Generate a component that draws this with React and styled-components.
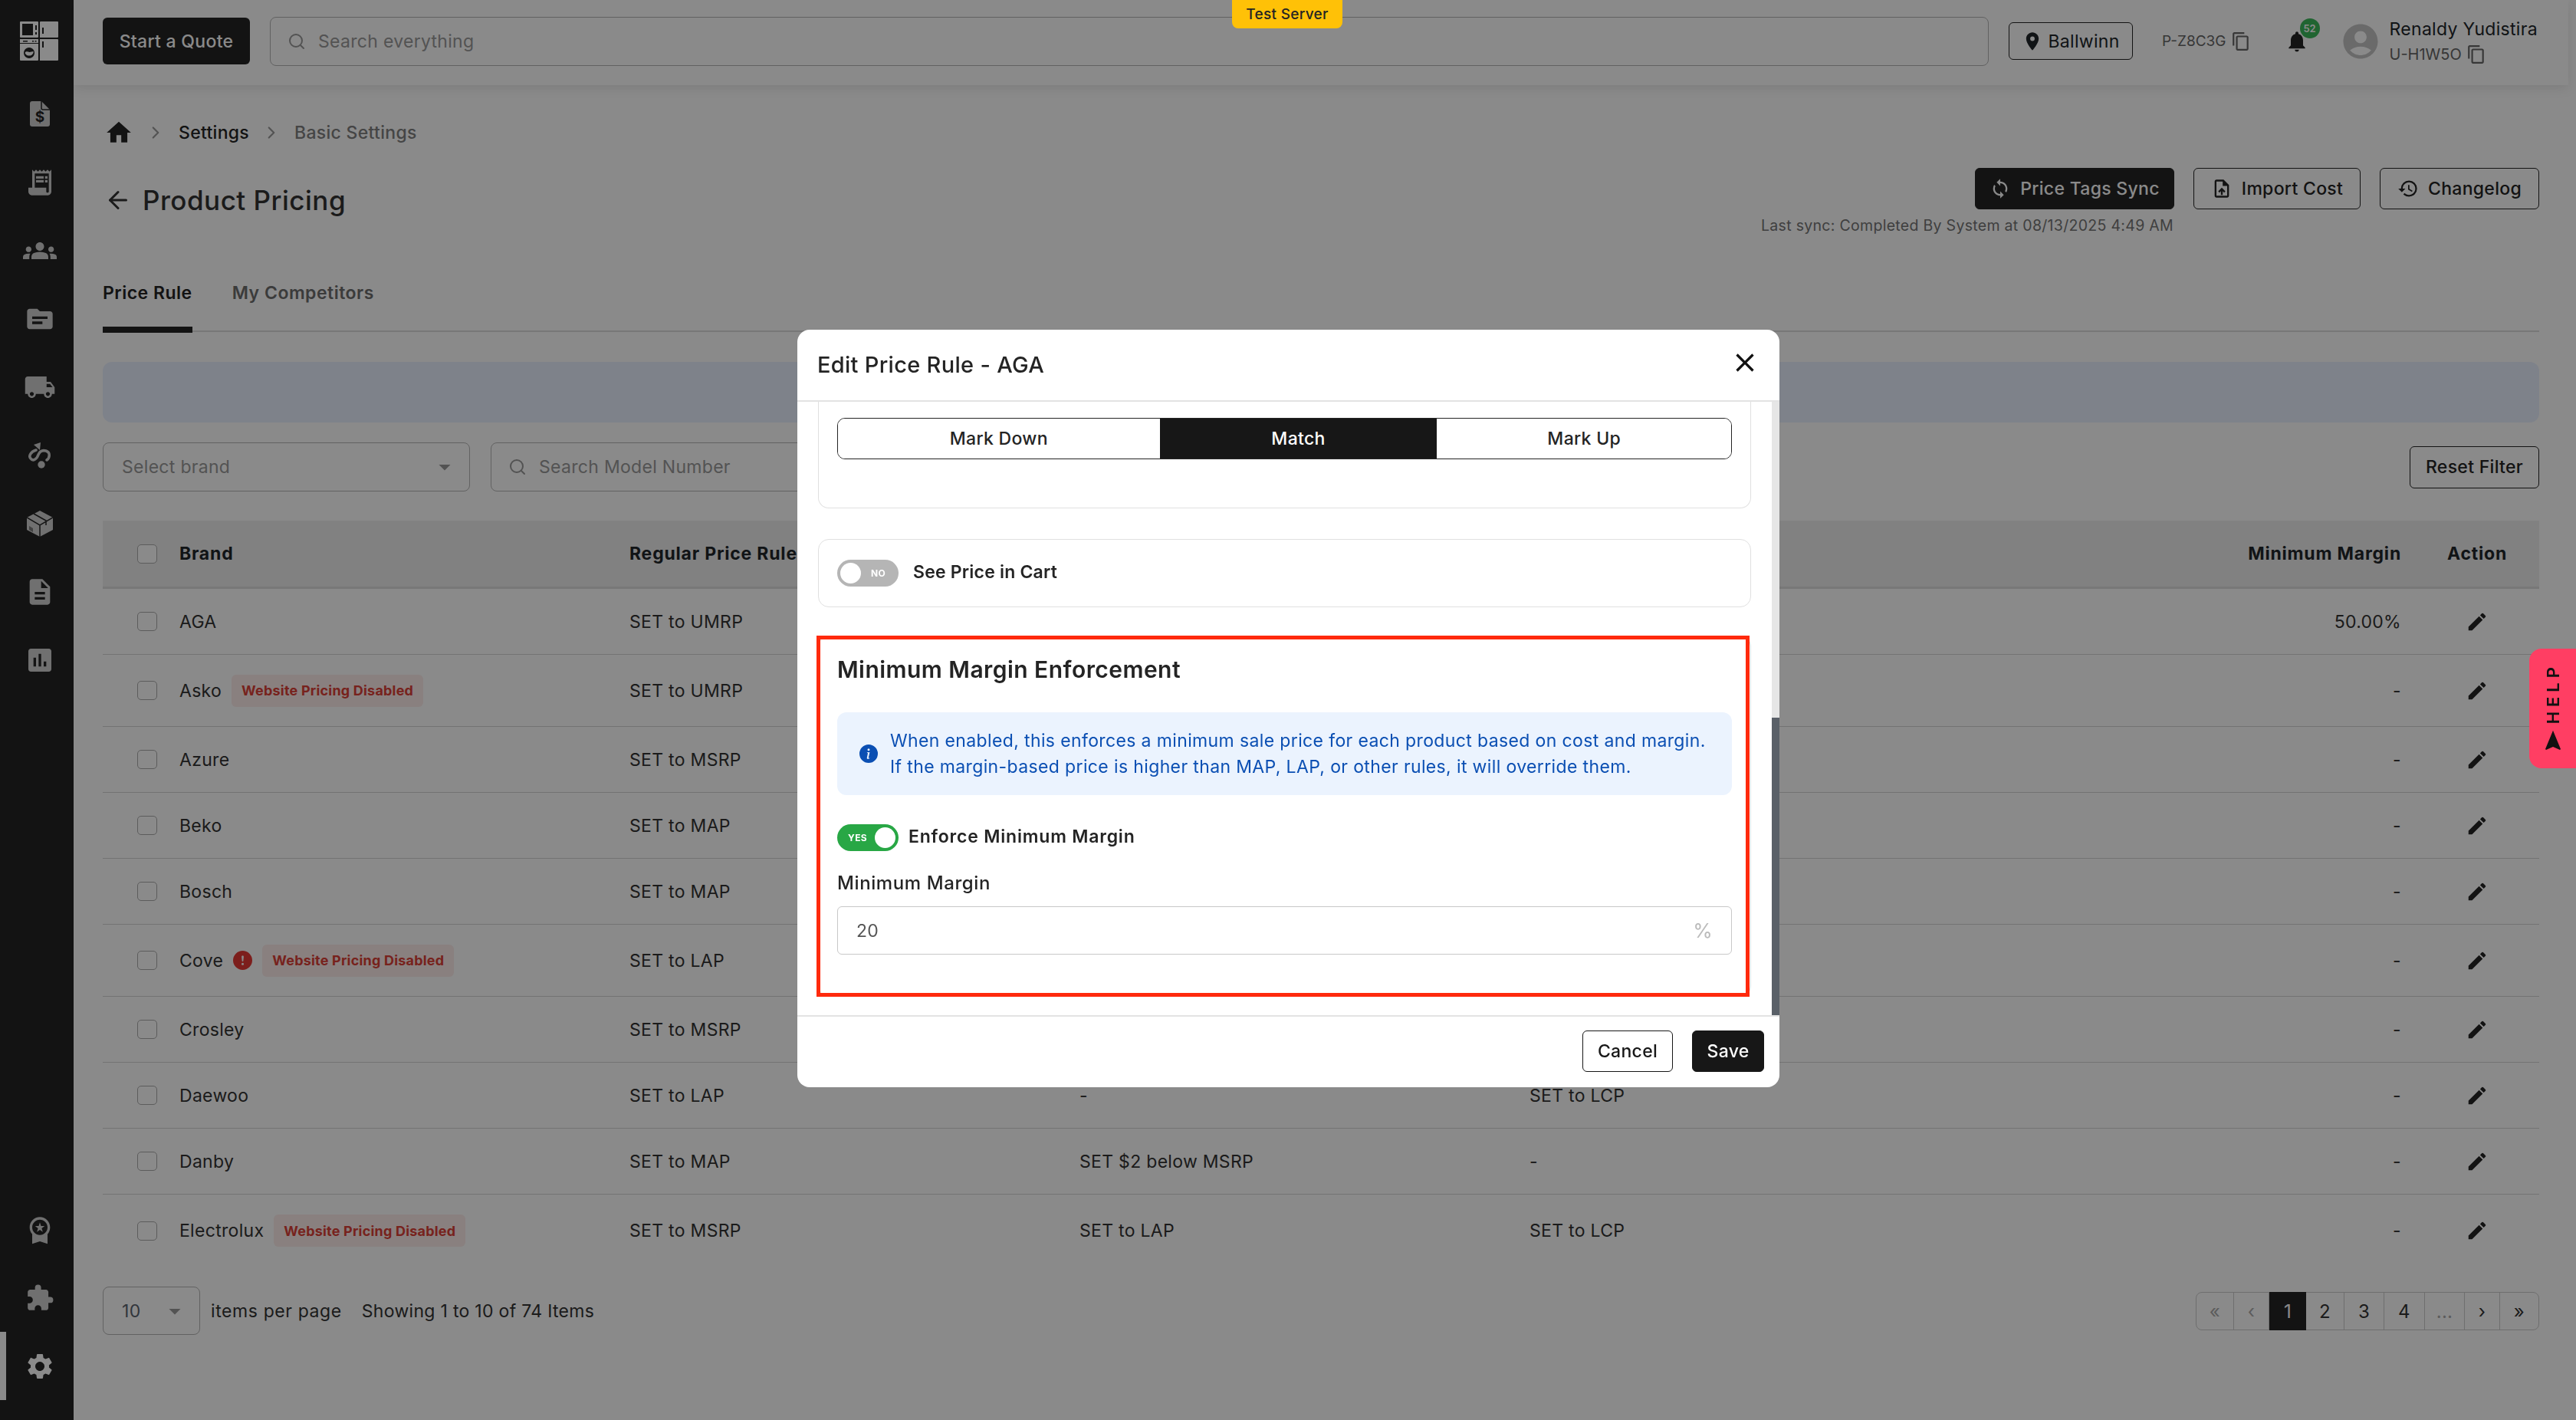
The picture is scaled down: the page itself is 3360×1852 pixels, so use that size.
import React from "react";
import styled, { createGlobalStyle } from "styled-components";
import {
  MdHome, MdReceiptLong, MdGroups, MdTopic, MdLocalShipping, MdDescription, MdAssessment,
  MdWorkspacePremium, MdExtension, MdSettings, MdLocationOn, MdOutlineContentCopy, MdNotifications,
  MdAccountCircle, MdSync, MdOutlineUploadFile, MdHistory, MdEdit, MdClose, MdNavigation, MdArrowDropDown,
} from "react-icons/md";
import { LuChevronRight, LuArrowLeft, LuSearch } from "react-icons/lu";
import { BsInfoCircleFill, BsExclamationCircleFill } from "react-icons/bs";

const FONT = `Inter, "Liberation Sans", sans-serif`;

const GlobalStyle = createGlobalStyle`
  html, body { margin: 0; padding: 0; background: #fff; }
  body { font-family: ${FONT}; color: #212529; overflow: hidden; letter-spacing: 0.3px; }
  * { box-sizing: border-box; }
  button { letter-spacing: inherit; }
`;

const Shell = styled.div`
  display: flex;
  width: 3360px;
  height: 1852px;
  overflow: hidden;
`;
const Sidebar = styled.nav`
  width: 96px;
  flex: none;
  background: #242424;
  display: flex;
  flex-direction: column;
  align-items: center;
  padding-top: 28px;
  color: #cfcfcf;
`;
const NavTop = styled.div`
  display: flex;
  flex-direction: column;
  align-items: center;
  width: 100%;
  flex: 1;
`;
const NavSlot = styled.div`
  width: 100%;
  height: 89px;
  display: flex;
  align-items: center;
  justify-content: center;
  font-size: ${p => p.$size || 36}px;
  border-left: 8px solid ${p => (p.$active ? "#fff" : "transparent")};
  color: ${p => (p.$active ? "#fff" : "#cfcfcf")};
`;
const NavBottom = styled.div`
  width: 100%;
  padding-bottom: 26px;
`;
const Logo = styled.svg`
  width: 50px;
  height: 51px;
  margin: 0 0 25px 6px;
`;

const Main = styled.div`
  flex: 1;
  min-width: 0;
  display: flex;
  flex-direction: column;
`;
const TopBar = styled.header`
  height: 111px;
  flex: none;
  width: 3254px;
  background: #fff;
  box-shadow: 0 4px 14px rgba(0, 0, 0, 0.1);
  display: flex;
  align-items: center;
  padding: 0 0 4px 38px;
`;
const QuoteButton = styled.button`
  width: 192px;
  height: 61px;
  background: #242424;
  border: 0;
  border-radius: 6px;
  color: #fff;
  font: 500 23px ${FONT};
  padding: 0;
`;
const SearchBox = styled.div`
  width: 2242px;
  height: 64px;
  margin-left: 26px;
  border: 1px solid #b5b5b5;
  border-radius: 8px;
  display: flex;
  align-items: center;
  gap: 16px;
  padding-left: 22px;
  color: #999;
  font-size: 23px;
`;
const LocationChip = styled.div`
  width: 162px;
  height: 49px;
  margin-left: 26px;
  border: 1px solid #242424;
  border-radius: 6px;
  display: flex;
  align-items: center;
  justify-content: center;
  gap: 6px;
  font-size: 23px;
`;
const CodeText = styled.div`
  margin-left: 38px;
  font-size: 19px;
  letter-spacing: 0;
  color: #666;
  display: flex;
  align-items: center;
  gap: 6px;
  svg { font-size: 26px; }
`;
const BellWrap = styled.div`
  position: relative;
  margin-left: 44px;
  width: 32px;
  height: 32px;
  font-size: 36px;
  color: #242424;
  display: flex;
  align-items: center;
  justify-content: center;
`;
const BellCount = styled.span`
  position: absolute;
  top: -14px;
  right: -14px;
  width: 26px;
  height: 26px;
  border-radius: 50%;
  background: #3cb95b;
  color: #fff;
  font-size: 13px;
  font-weight: 600;
  letter-spacing: 0;
  display: flex;
  align-items: center;
  justify-content: center;
`;
const Avatar = styled.div`
  margin-left: 40px;
  width: 54px;
  height: 54px;
  font-size: 62px;
  color: #c4c4c4;
  display: flex;
  align-items: center;
  justify-content: center;
`;
const UserBlock = styled.div`
  margin: 2px 0 0 11px;
  display: flex;
  flex-direction: column;
  gap: 8px;
`;
const UserName = styled.div`
  font-size: 23px;
  line-height: 24px;
`;
const UserCode = styled(CodeText)`
  margin-left: 0;
  font-size: 20px;
  line-height: 24px;
`;

const Content = styled.main`
  padding: 48px 48px 0 38px;
`;
const Crumbs = styled.div`
  height: 28px;
  display: flex;
  align-items: center;
  font-size: 23px;
  font-weight: 500;
  color: #242424;
  padding-left: 2px;
`;
const Crumb = styled.span`
  color: ${p => (p.$muted ? "#808080" : "#242424")};
`;
const CrumbArrow = styled.span`
  display: flex;
  margin: 0 17px 0 16px;
  font-size: 26px;
  color: #999;
`;
const TitleRow = styled.div`
  display: flex;
  justify-content: space-between;
  align-items: flex-start;
  margin-top: 32px;
  height: 75px;
`;
const PageTitle = styled.h1`
  margin: 15px 0 0;
  display: flex;
  align-items: center;
  gap: 14px;
  font-size: 35px;
  font-weight: 500;
  height: 54px;
  padding-left: 2px;
  letter-spacing: 0.5px;
  color: #333;
  svg { font-size: 36px; }
`;
const Actions = styled.div`
  display: flex;
  flex-direction: column;
  align-items: flex-end;
`;
const ActionButtons = styled.div`
  display: flex;
  gap: 25px;
`;
const ActionButton = styled.button`
  width: ${p => p.$w}px;
  height: 54px;
  border: 1px solid #242424;
  border-radius: 6px;
  background: ${p => (p.$dark ? "#242424" : "transparent")};
  color: ${p => (p.$dark ? "#fff" : "#242424")};
  font: 500 23px ${FONT};
  display: flex;
  align-items: center;
  justify-content: center;
  gap: 12px;
  padding: 0;
  svg { font-size: 28px; }
`;
const SyncNote = styled.div`
  margin: 9px 477px 0 0;
  font-size: 19.5px;
  color: #757575;
  white-space: nowrap;
`;
const Tabs = styled.div`
  display: flex;
  gap: 52px;
  height: 91px;
  margin-top: 48px;
  border-bottom: 2px solid #ddd;
`;
const Tab = styled.div`
  height: 92px;
  display: flex;
  align-items: center;
  padding-bottom: 4px;
  font-size: 23px;
  font-weight: 600;
  letter-spacing: 0.5px;
  color: ${p => (p.$active ? "#242424" : "#6e6e6e")};
  border-bottom: 8px solid ${p => (p.$active ? "#242424" : "transparent")};
`;
const Banner = styled.div`
  height: 79px;
  margin-top: 39px;
  background: #e9f0ff;
  border-radius: 12px;
`;
const Filters = styled.div`
  display: flex;
  justify-content: space-between;
  align-items: center;
  margin-top: 26px;
  height: 64px;
`;
const FilterGroup = styled.div`
  display: flex;
  gap: 27px;
`;
const SelectField = styled.div`
  width: ${p => p.$w}px;
  height: ${p => p.$h || 64}px;
  border: 1px solid #b5b5b5;
  border-radius: 8px;
  display: flex;
  align-items: center;
  justify-content: space-between;
  padding: 0 14px 0 24px;
  color: ${p => p.$color || "#999"};
  font-size: 23px;
  svg { font-size: 36px; color: #999; }
`;
const SearchField = styled(SearchBox)`
  width: 600px;
  margin-left: 0;
`;
const ResetButton = styled(ActionButton)`
  width: 169px;
  height: 55px;
`;
const Table = styled.div`
  margin-top: 38px;
`;
const TableHead = styled.div`
  display: grid;
  grid-template-columns: 45px 597px 587px 587px 1fr 139px 162px;
  align-items: center;
  height: 89px;
  padding-left: 45px;
  background: #eee;
  border-bottom: 3px solid #dedede;
  font-size: 23px;
  font-weight: 700;
  letter-spacing: 0.8px;
`;
const Row = styled(TableHead)`
  height: ${p => (p.$tall ? 94 : 86)}px;
  background: transparent;
  border-bottom: ${p => (p.$last ? "0" : "1px solid #d4d4d4")};
  font-weight: 400;
  letter-spacing: 0.3px;
  color: #333;
`;
const Check = styled.span`
  display: block;
  width: 26px;
  height: 25px;
  border: 1px solid #aaa;
  border-radius: 5px;
  background: #fff;
`;
const BrandCell = styled.div`
  display: flex;
  align-items: center;
  gap: 13px;
  margin-left: 10px;
`;
const Warn = styled.span`
  display: flex;
  color: #e53935;
  font-size: 25px;
`;
const DisabledTag = styled.span`
  height: 42px;
  padding: 0 13px;
  display: flex;
  align-items: center;
  border-radius: 6px;
  background: #fdecea;
  color: #dc3f37;
  font-size: 18px;
  font-weight: 700;
  letter-spacing: 0.2px;
`;
const RightCell = styled.div`
  text-align: right;
  margin-left: -200px;
  padding-right: 18px;
`;
const ActionHead = styled.div`
  text-align: center;
`;
const EditCell = styled.div`
  display: flex;
  justify-content: center;
  font-size: 30px;
  color: #242424;
`;
const FooterRow = styled.div`
  display: flex;
  justify-content: space-between;
  align-items: center;
  margin-top: 26px;
  font-size: 23px;
  color: #333;
`;
const PerPage = styled.div`
  display: flex;
  align-items: center;
  gap: 14px;
`;
const ItemsText = styled.span`
  letter-spacing: 0.6px;
`;
const ShowingText = styled.span`
  margin-left: 12px;
`;
const Pager = styled.div`
  display: flex;
  height: 50px;
  margin-top: 1px;
  border: 1px solid #ccc;
  border-radius: 8px;
  font-size: 24px;
`;
const PageCell = styled.div`
  width: ${p => p.$w}px;
  display: flex;
  align-items: center;
  justify-content: center;
  margin: ${p => (p.$active ? "-1px 0" : "0")};
  background: ${p => (p.$active ? "#242424" : "transparent")};
  color: ${p => (p.$active ? "#fff" : p.$muted ? "#aaa" : "#333")};
  border-right: ${p => (p.$active || p.$end ? "0" : "1px solid #ccc")};
`;

const Backdrop = styled.div`
  position: fixed;
  inset: 0;
  background: rgba(0, 0, 0, 0.46);
  display: flex;
  align-items: flex-start;
  justify-content: center;
`;
const Modal = styled.div`
  margin: 430px 0 0 1px;
  width: 1281px;
  height: 988px;
  background: #fff;
  border-radius: 16px;
  overflow: hidden;
  display: flex;
  flex-direction: column;
`;
const ModalHead = styled.div`
  height: 94px;
  flex: none;
  border-bottom: 2px solid #e3e3e3;
  display: flex;
  align-items: center;
  justify-content: space-between;
  padding: 0 25px 2px 26px;
  font-size: 29px;
  font-weight: 500;
  color: #242424;
  svg { font-size: 40px; color: #111; margin-top: -4px; }
`;
const ModalBody = styled.div`
  position: relative;
  height: 800px;
  flex: none;
  padding: 0 37px 0 27px;
  overflow: hidden;
`;
const ScrollTrack = styled.div`
  position: absolute;
  top: 0;
  right: 0;
  bottom: 0;
  width: 10px;
  background: #e6e6e6;
`;
const ScrollThumb = styled.div`
  position: absolute;
  top: 412px;
  bottom: 0;
  left: 0;
  right: 0;
  background: #5a6068;
`;
const Card = styled.div`
  border: 1px solid #e0e0e0;
  border-radius: 14px;
  padding: 0 24px;
  margin-bottom: 40px;
`;
const PartialCard = styled(Card)`
  border-top: 0;
  border-radius: 0 0 14px 14px;
  height: 139px;
  padding-top: 21px;
`;
const Segments = styled.div`
  display: flex;
  height: 54px;
  border: 1px solid #242424;
  border-radius: 10px;
  overflow: hidden;
`;
const Segment = styled.div`
  width: ${p => p.$w}px;
  display: flex;
  align-items: center;
  justify-content: center;
  font-size: 23px;
  font-weight: 500;
  background: ${p => (p.$on ? "#171717" : "#fff")};
  color: ${p => (p.$on ? "#fff" : "#242424")};
`;
const ToggleCard = styled(Card)`
  height: 89px;
  display: flex;
  align-items: center;
  gap: 19px;
  margin-bottom: 37px;
`;
const SwitchBody = styled.span`
  width: 80px;
  height: 35px;
  flex: none;
  border-radius: 18px;
  background: ${p => (p.$on ? "#28a745" : "#b5b5b5")};
  display: flex;
  align-items: center;
  flex-direction: ${p => (p.$on ? "row-reverse" : "row")};
  justify-content: space-between;
  padding: 0 4px;
  color: #fff;
  font-size: 12px;
  font-weight: 700;
`;
const SwitchKnob = styled.span`
  width: 27px;
  height: 27px;
  border-radius: 50%;
  background: #fff;
`;
const SwitchText = styled.span`
  flex: 1;
  text-align: center;
`;
const ToggleLabel = styled.span`
  font-size: 23px;
  font-weight: 600;
  letter-spacing: ${p => p.$spacing || 0.2}px;
  color: #242424;
  margin-top: -4px;
`;
const EnforceCard = styled(Card)`
  height: 471px;
  margin: 0;
  padding-top: 24px;
  position: relative;
`;
const Highlight = styled.div`
  position: absolute;
  inset: -1px 1px -1px -3px;
  border: 5px solid #ff2a0d;
`;
const CardTitle = styled.h3`
  margin: 0;
  font-size: 30px;
  line-height: 38px;
  font-weight: 600;
  letter-spacing: 0.45px;
  color: #242424;
`;
const InfoBox = styled.div`
  margin-top: 37px;
  height: 108px;
  background: #ebf3fe;
  border-radius: 12px;
  display: flex;
  align-items: center;
  gap: 16px;
  padding-left: 29px;
  color: #0b4fb3;
  font-size: 23px;
  line-height: 34px;
  letter-spacing: 0.37px;
  svg { font-size: 24px; flex: none; }
`;
const EnforceRow = styled.div`
  margin-top: 38px;
  display: flex;
  align-items: center;
  gap: 13px;
`;
const FieldLabel = styled.div`
  margin-top: 26px;
  font-size: 24px;
  line-height: 32px;
  font-weight: 500;
  letter-spacing: 0.6px;
  color: #242424;
`;
const FieldInput = styled.div`
  margin-top: 14px;
  height: 63px;
  border: 1px solid #c8c8c8;
  border-radius: 6px;
  display: flex;
  align-items: center;
  justify-content: space-between;
  padding: 0 24px;
  font-size: 23px;
  color: #555;
`;
const Percent = styled.span`
  color: #bbb;
  font-size: 26px;
`;
const ModalFoot = styled.div`
  flex: 1;
  border-top: 2px solid #e3e3e3;
  display: flex;
  justify-content: flex-end;
  align-items: flex-start;
  gap: 25px;
  padding: 18px 20px 0 0;
`;
const FootButton = styled.button`
  width: ${p => p.$w}px;
  height: 54px;
  border: 1px solid #171717;
  border-radius: 6px;
  background: ${p => (p.$dark ? "#171717" : "#fff")};
  color: ${p => (p.$dark ? "#fff" : "#171717")};
  font: 500 23px ${FONT};
  padding: 0;
`;

const ServerTag = styled.div`
  position: fixed;
  top: 0;
  left: 1607px;
  width: 144px;
  height: 37px;
  background: #ffc107;
  border-radius: 0 0 8px 8px;
  display: flex;
  align-items: center;
  justify-content: center;
  font-size: 19px;
  font-weight: 500;
  color: #242424;
`;
const HelpTab = styled.div`
  position: fixed;
  top: 846px;
  right: 0;
  width: 61px;
  height: 156px;
  background: #ff3e63;
  border-radius: 16px 0 0 16px;
  display: flex;
  flex-direction: column-reverse;
  align-items: center;
  justify-content: flex-start;
  gap: 6px;
  padding-bottom: 20px;
  color: #111;
  svg { font-size: 32px; }
`;
const HelpText = styled.span`
  writing-mode: vertical-rl;
  transform: rotate(180deg);
  font-size: 22px;
  font-weight: 600;
  letter-spacing: 6px;
`;

function DocDollar() {
  return (
    <svg width="26" height="33" viewBox="0 0 26 33">
      <path fill="currentColor" d="M3 0h12l11 11v19a3 3 0 0 1-3 3H3a3 3 0 0 1-3-3V3a3 3 0 0 1 3-3z" />
      <path fill="none" stroke="#242424" strokeWidth="1.500" d="M15 0v9a2 2 0 0 0 2 2h9" />
      <text x="13" y="27" textAnchor="middle" fontSize="19" fontWeight="700" fill="#242424" fontFamily="Inter, sans-serif">$</text>
    </svg>
  );
}

function RouteMark() {
  return (
    <svg width="30" height="34" viewBox="0 0 30 34">
      <path fill="currentColor" d="M7 3l9-3-1 10z" />
      <path fill="none" stroke="currentColor" strokeWidth="3.500" strokeLinecap="round" d="M10 10C3 12 0 18 3 21c3 4 8 1 10-5 2-5 6-6 10-5 6 2 5 9 1 12" />
      <circle cx="17" cy="29" r="4.700" fill="currentColor" />
    </svg>
  );
}

function BoxMark() {
  return (
    <svg width="34" height="34" viewBox="0 0 34 34">
      <path fill="currentColor" d="M17 0l17 9v16l-17 9-17-9V9z" />
      <path fill="none" stroke="#242424" strokeWidth="1.500" d="M0 9l17 10 17-10M17 19v15M9 4l16 9v6" />
      <path fill="#242424" opacity=".5" d="M3 20l5 3v5l-5-3z" />
    </svg>
  );
}

function LogoMark() {
  return (
    <Logo viewBox="0 0 50 51">
      <path fill="#fff" fillRule="evenodd" d="M1 0h22a1 1 0 0 1 1 1v19a1 1 0 0 1-1 1H1a1 1 0 0 1-1-1V1a1 1 0 0 1 1-1zM3 3v15h14V3zM20 5v6h2V5zM20 14v3h2v-3z" />
      <path fill="#fff" fillRule="evenodd" d="M27 0h22a1 1 0 0 1 1 1v19a1 1 0 0 1-1 1H26V1a1 1 0 0 1 1-1zM29 8v8h2V8z" />
      <path fill="#fff" fillRule="evenodd" d="M0 23h24v5H0zM4 25v1.500h6V25zM16 25v1.500h2V25zM19.500 25v1.500h2V25z" />
      <path fill="#fff" fillRule="evenodd" d="M0 29h24v21a1 1 0 0 1-1 1H1a1 1 0 0 1-1-1zM12 34a7 7 0 1 0 .01 0zM6.500 41c2-3 4-1 6-1s3-1 5-1v2a6 6 0 0 1-11 0z" />
      <path fill="#fff" fillRule="evenodd" d="M26 23h23a1 1 0 0 1 1 1v26a1 1 0 0 1-1 1H26zM29 26v8h2v-8z" />
    </Logo>
  );
}

const BRANDS = [
  { name: "AGA", c1: "SET to UMRP", margin: "50.00%" },
  { name: "Asko", tag: true, c1: "SET to UMRP" },
  { name: "Azure", c1: "SET to MSRP" },
  { name: "Beko", c1: "SET to MAP" },
  { name: "Bosch", c1: "SET to MAP" },
  { name: "Cove", warn: true, tag: true, c1: "SET to LAP" },
  { name: "Crosley", c1: "SET to MSRP" },
  { name: "Daewoo", c1: "SET to LAP", c2: "-", c3: "SET to LCP" },
  { name: "Danby", c1: "SET to MAP", c2: "SET $2 below MSRP", c3: "-" },
  { name: "Electrolux", tag: true, c1: "SET to MSRP", c2: "SET to LAP", c3: "SET to LCP" },
];

const PAGES = [
  { t: "«", w: 49, muted: true }, { t: "‹", w: 46, muted: true }, { t: "1", w: 48, active: true },
  { t: "2", w: 50 }, { t: "3", w: 52 }, { t: "4", w: 53 }, { t: "...", w: 52, muted: true },
  { t: "›", w: 46 }, { t: "»", w: 50, end: true },
];

export default function App() {
  return (
    <>
      <GlobalStyle />
      <Shell>
        <Sidebar>
          <NavTop>
            <LogoMark />
            <NavSlot><DocDollar /></NavSlot>
            <NavSlot $size={40}><MdReceiptLong /></NavSlot>
            <NavSlot $size={44}><MdGroups /></NavSlot>
            <NavSlot $size={40}><MdTopic /></NavSlot>
            <NavSlot $size={42}><MdLocalShipping /></NavSlot>
            <NavSlot><RouteMark /></NavSlot>
            <NavSlot><BoxMark /></NavSlot>
            <NavSlot $size={40}><MdDescription /></NavSlot>
            <NavSlot $size={40}><MdAssessment /></NavSlot>
          </NavTop>
          <NavBottom>
            <NavSlot $size={40}><MdWorkspacePremium /></NavSlot>
            <NavSlot $size={38}><MdExtension /></NavSlot>
            <NavSlot $size={40} $active><MdSettings /></NavSlot>
          </NavBottom>
        </Sidebar>
        <Main>
          <TopBar>
            <QuoteButton>Start a Quote</QuoteButton>
            <SearchBox><LuSearch size={24} />Search everything</SearchBox>
            <LocationChip><MdLocationOn size={28} />Ballwinn</LocationChip>
            <CodeText>P-Z8C3G <MdOutlineContentCopy /></CodeText>
            <BellWrap><MdNotifications /><BellCount>52</BellCount></BellWrap>
            <Avatar><MdAccountCircle /></Avatar>
            <UserBlock>
              <UserName>Renaldy Yudistira</UserName>
              <UserCode>U-H1W5O <MdOutlineContentCopy /></UserCode>
            </UserBlock>
          </TopBar>
          <Content>
            <Crumbs>
              <MdHome size={38} />
              <CrumbArrow><LuChevronRight /></CrumbArrow>
              <Crumb>Settings</Crumb>
              <CrumbArrow><LuChevronRight /></CrumbArrow>
              <Crumb $muted>Basic Settings</Crumb>
            </Crumbs>
            <TitleRow>
              <PageTitle><LuArrowLeft />Product Pricing</PageTitle>
              <Actions>
                <ActionButtons>
                  <ActionButton $dark $w={260}><MdSync />Price Tags Sync</ActionButton>
                  <ActionButton $w={218}><MdOutlineUploadFile />Import Cost</ActionButton>
                  <ActionButton $w={208}><MdHistory />Changelog</ActionButton>
                </ActionButtons>
                <SyncNote>Last sync: Completed By System at 08/13/2025 4:49 AM</SyncNote>
              </Actions>
            </TitleRow>
            <Tabs>
              <Tab $active>Price Rule</Tab>
              <Tab>My Competitors</Tab>
            </Tabs>
            <Banner />
            <Filters>
              <FilterGroup>
                <SelectField $w={479}>Select brand<MdArrowDropDown /></SelectField>
                <SearchField><LuSearch size={24} />Search Model Number</SearchField>
              </FilterGroup>
              <ResetButton>Reset Filter</ResetButton>
            </Filters>
            <Table>
              <TableHead>
                <Check />
                <BrandCell>Brand</BrandCell>
                <div>Regular Price Rule</div>
                <div />
                <div />
                <RightCell>Minimum Margin</RightCell>
                <ActionHead>Action</ActionHead>
              </TableHead>
              {BRANDS.map((b, i) => (
                <Row key={b.name} $tall={b.tag} $last={i === BRANDS.length - 1}>
                  <Check />
                  <BrandCell>
                    {b.name}
                    {b.warn && <Warn><BsExclamationCircleFill /></Warn>}
                    {b.tag && <DisabledTag>Website Pricing Disabled</DisabledTag>}
                  </BrandCell>
                  <div>{b.c1}</div>
                  <div>{b.c2}</div>
                  <div>{b.c3}</div>
                  <RightCell>{b.margin || "-"}</RightCell>
                  <EditCell><MdEdit /></EditCell>
                </Row>
              ))}
            </Table>
            <FooterRow>
              <PerPage>
                <SelectField $w={127} $h={63} $color="#5c6470">10<MdArrowDropDown /></SelectField>
                <ItemsText>items per page</ItemsText>
                <ShowingText>Showing 1 to 10 of 74 Items</ShowingText>
              </PerPage>
              <Pager>
                {PAGES.map(p => (
                  <PageCell key={p.t} $w={p.w} $active={p.active} $muted={p.muted} $end={p.end}>{p.t}</PageCell>
                ))}
              </Pager>
            </FooterRow>
          </Content>
        </Main>
      </Shell>
      <Backdrop>
        <Modal>
          <ModalHead>Edit Price Rule - AGA<MdClose /></ModalHead>
          <ModalBody>
            <PartialCard>
              <Segments>
                <Segment $w={420}>Mark Down</Segment>
                <Segment $w={362} $on>Match</Segment>
                <Segment $w={384}>Mark Up</Segment>
              </Segments>
            </PartialCard>
            <ToggleCard>
              <SwitchBody><SwitchKnob /><SwitchText>NO</SwitchText></SwitchBody>
              <ToggleLabel>See Price in Cart</ToggleLabel>
            </ToggleCard>
            <EnforceCard>
              <Highlight />
              <CardTitle>Minimum Margin Enforcement</CardTitle>
              <InfoBox>
                <BsInfoCircleFill />
                <div>
                  When enabled, this enforces a minimum sale price for each product based on cost and margin.<br />
                  If the margin-based price is higher than MAP, LAP, or other rules, it will override them.
                </div>
              </InfoBox>
              <EnforceRow>
                <SwitchBody $on><SwitchKnob /><SwitchText>YES</SwitchText></SwitchBody>
                <ToggleLabel $spacing={0.8}>Enforce Minimum Margin</ToggleLabel>
              </EnforceRow>
              <FieldLabel>Minimum Margin</FieldLabel>
              <FieldInput>20<Percent>%</Percent></FieldInput>
            </EnforceCard>
            <ScrollTrack><ScrollThumb /></ScrollTrack>
          </ModalBody>
          <ModalFoot>
            <FootButton $w={118}>Cancel</FootButton>
            <FootButton $w={94} $dark>Save</FootButton>
          </ModalFoot>
        </Modal>
      </Backdrop>
      <ServerTag>Test Server</ServerTag>
      <HelpTab><MdNavigation /><HelpText>HELP</HelpText></HelpTab>
    </>
  );
}
